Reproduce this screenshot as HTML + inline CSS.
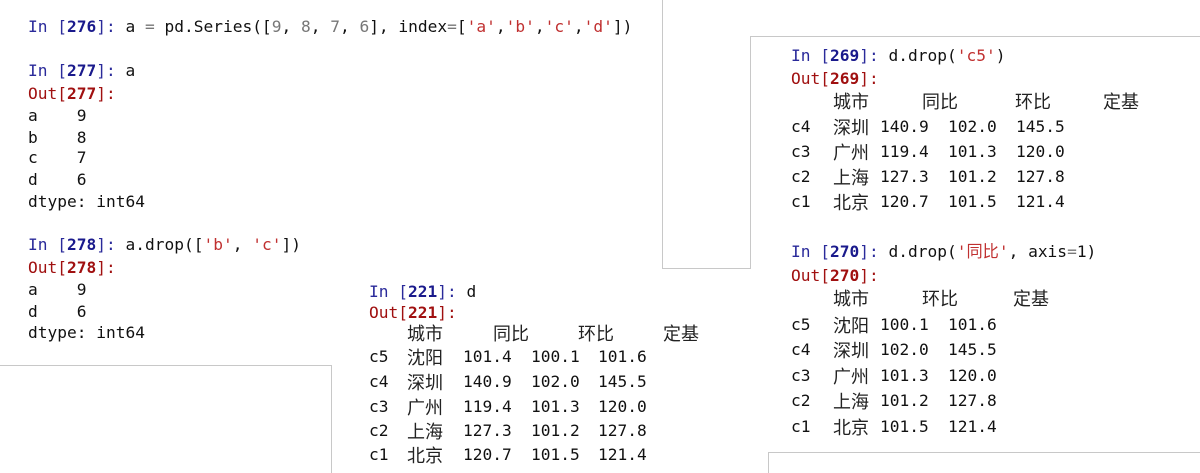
<!DOCTYPE html>
<html><head><meta charset="utf-8"><style>
body{margin:0;width:1200px;height:473px;background:#fff;position:relative;overflow:hidden;font-family:"DejaVu Sans Mono","Noto Sans CJK SC",monospace;font-size:16.2px;color:#111;}
.l{position:absolute;white-space:pre;line-height:22px;height:22px;}
.c{font-family:"Noto Sans CJK SC",sans-serif;font-size:18px;color:#222}
.i{color:#2a2a9a}
.b{font-weight:bold;color:#1a1a8c}
.o{color:#a01010}
.ob{font-weight:bold;color:#a01010}
.s{color:#c03030}
.n{color:#777}
.line{position:absolute;background:#c8c8c8}
</style></head><body>
<div class="line" style="left:662px;top:0;width:1px;height:269px"></div>
<div class="line" style="left:662px;top:268px;width:89px;height:1px"></div>
<div class="line" style="left:750px;top:36px;width:450px;height:1px"></div>
<div class="line" style="left:750px;top:36px;width:1px;height:233px"></div>
<div class="line" style="left:0;top:365px;width:332px;height:1px"></div>
<div class="line" style="left:331px;top:365px;width:1px;height:108px"></div>
<div class="line" style="left:768px;top:452px;width:432px;height:1px"></div>
<div class="line" style="left:768px;top:452px;width:1px;height:21px"></div>

<div class="l" style="left:28px;top:16px"><span class="i">In [</span><span class="b">276</span><span class="i">]:</span> a <span class="n">=</span> pd.Series([<span class="n">9</span>, <span class="n">8</span>, <span class="n">7</span>, <span class="n">6</span>], index<span class="n">=</span>[<span class="s">'a'</span>,<span class="s">'b'</span>,<span class="s">'c'</span>,<span class="s">'d'</span>])</div>
<div class="l" style="left:28px;top:60px"><span class="i">In [</span><span class="b">277</span><span class="i">]:</span> a</div>
<div class="l" style="left:28px;top:83px"><span class="o">Out[</span><span class="ob">277</span><span class="o">]:</span></div>
<div class="l" style="left:28px;top:105px">a    9</div>
<div class="l" style="left:28px;top:127px">b    8</div>
<div class="l" style="left:28px;top:147px">c    7</div>
<div class="l" style="left:28px;top:169px">d    6</div>
<div class="l" style="left:28px;top:191px">dtype: int64</div>
<div class="l" style="left:28px;top:234px"><span class="i">In [</span><span class="b">278</span><span class="i">]:</span> a.drop([<span class="s">'b'</span>, <span class="s">'c'</span>])</div>
<div class="l" style="left:28px;top:257px"><span class="o">Out[</span><span class="ob">278</span><span class="o">]:</span></div>
<div class="l" style="left:28px;top:279px">a    9</div>
<div class="l" style="left:28px;top:301px">d    6</div>
<div class="l" style="left:28px;top:322px">dtype: int64</div>

<div class="l" style="left:369px;top:281px"><span class="i">In [</span><span class="b">221</span><span class="i">]:</span> d</div>
<div class="l" style="left:369px;top:302px"><span class="o">Out[</span><span class="ob">221</span><span class="o">]:</span></div>
<div class="l c" style="left:407px;top:322px">城市</div><div class="l c" style="left:493px;top:322px">同比</div><div class="l c" style="left:578px;top:322px">环比</div><div class="l c" style="left:663px;top:322px">定基</div>
<div class="l" style="left:369px;top:346px">c5</div><div class="l c" style="left:407px;top:346px">沈阳</div><div class="l" style="left:463px;top:346px">101.4</div><div class="l" style="left:531px;top:346px">100.1</div><div class="l" style="left:598px;top:346px">101.6</div>
<div class="l" style="left:369px;top:371px">c4</div><div class="l c" style="left:407px;top:371px">深圳</div><div class="l" style="left:463px;top:371px">140.9</div><div class="l" style="left:531px;top:371px">102.0</div><div class="l" style="left:598px;top:371px">145.5</div>
<div class="l" style="left:369px;top:396px">c3</div><div class="l c" style="left:407px;top:396px">广州</div><div class="l" style="left:463px;top:396px">119.4</div><div class="l" style="left:531px;top:396px">101.3</div><div class="l" style="left:598px;top:396px">120.0</div>
<div class="l" style="left:369px;top:420px">c2</div><div class="l c" style="left:407px;top:420px">上海</div><div class="l" style="left:463px;top:420px">127.3</div><div class="l" style="left:531px;top:420px">101.2</div><div class="l" style="left:598px;top:420px">127.8</div>
<div class="l" style="left:369px;top:444px">c1</div><div class="l c" style="left:407px;top:444px">北京</div><div class="l" style="left:463px;top:444px">120.7</div><div class="l" style="left:531px;top:444px">101.5</div><div class="l" style="left:598px;top:444px">121.4</div>

<div class="l" style="left:791px;top:45px"><span class="i">In [</span><span class="b">269</span><span class="i">]:</span> d.drop(<span class="s">'c5'</span>)</div>
<div class="l" style="left:791px;top:68px"><span class="o">Out[</span><span class="ob">269</span><span class="o">]:</span></div>
<div class="l c" style="left:833px;top:90px">城市</div><div class="l c" style="left:922px;top:90px">同比</div><div class="l c" style="left:1015px;top:90px">环比</div><div class="l c" style="left:1103px;top:90px">定基</div>
<div class="l" style="left:791px;top:116px">c4</div><div class="l c" style="left:833px;top:116px">深圳</div><div class="l" style="left:880px;top:116px">140.9</div><div class="l" style="left:948px;top:116px">102.0</div><div class="l" style="left:1016px;top:116px">145.5</div>
<div class="l" style="left:791px;top:141px">c3</div><div class="l c" style="left:833px;top:141px">广州</div><div class="l" style="left:880px;top:141px">119.4</div><div class="l" style="left:948px;top:141px">101.3</div><div class="l" style="left:1016px;top:141px">120.0</div>
<div class="l" style="left:791px;top:166px">c2</div><div class="l c" style="left:833px;top:166px">上海</div><div class="l" style="left:880px;top:166px">127.3</div><div class="l" style="left:948px;top:166px">101.2</div><div class="l" style="left:1016px;top:166px">127.8</div>
<div class="l" style="left:791px;top:191px">c1</div><div class="l c" style="left:833px;top:191px">北京</div><div class="l" style="left:880px;top:191px">120.7</div><div class="l" style="left:948px;top:191px">101.5</div><div class="l" style="left:1016px;top:191px">121.4</div>

<div class="l" style="left:791px;top:241px"><span class="i">In [</span><span class="b">270</span><span class="i">]:</span> d.drop(<span class="s">'同比'</span>, axis<span class="n">=</span>1)</div>
<div class="l" style="left:791px;top:265px"><span class="o">Out[</span><span class="ob">270</span><span class="o">]:</span></div>
<div class="l c" style="left:833px;top:287px">城市</div><div class="l c" style="left:922px;top:287px">环比</div><div class="l c" style="left:1013px;top:287px">定基</div>
<div class="l" style="left:791px;top:314px">c5</div><div class="l c" style="left:833px;top:314px">沈阳</div><div class="l" style="left:880px;top:314px">100.1</div><div class="l" style="left:948px;top:314px">101.6</div>
<div class="l" style="left:791px;top:339px">c4</div><div class="l c" style="left:833px;top:339px">深圳</div><div class="l" style="left:880px;top:339px">102.0</div><div class="l" style="left:948px;top:339px">145.5</div>
<div class="l" style="left:791px;top:365px">c3</div><div class="l c" style="left:833px;top:365px">广州</div><div class="l" style="left:880px;top:365px">101.3</div><div class="l" style="left:948px;top:365px">120.0</div>
<div class="l" style="left:791px;top:390px">c2</div><div class="l c" style="left:833px;top:390px">上海</div><div class="l" style="left:880px;top:390px">101.2</div><div class="l" style="left:948px;top:390px">127.8</div>
<div class="l" style="left:791px;top:416px">c1</div><div class="l c" style="left:833px;top:416px">北京</div><div class="l" style="left:880px;top:416px">101.5</div><div class="l" style="left:948px;top:416px">121.4</div>
</body></html>
